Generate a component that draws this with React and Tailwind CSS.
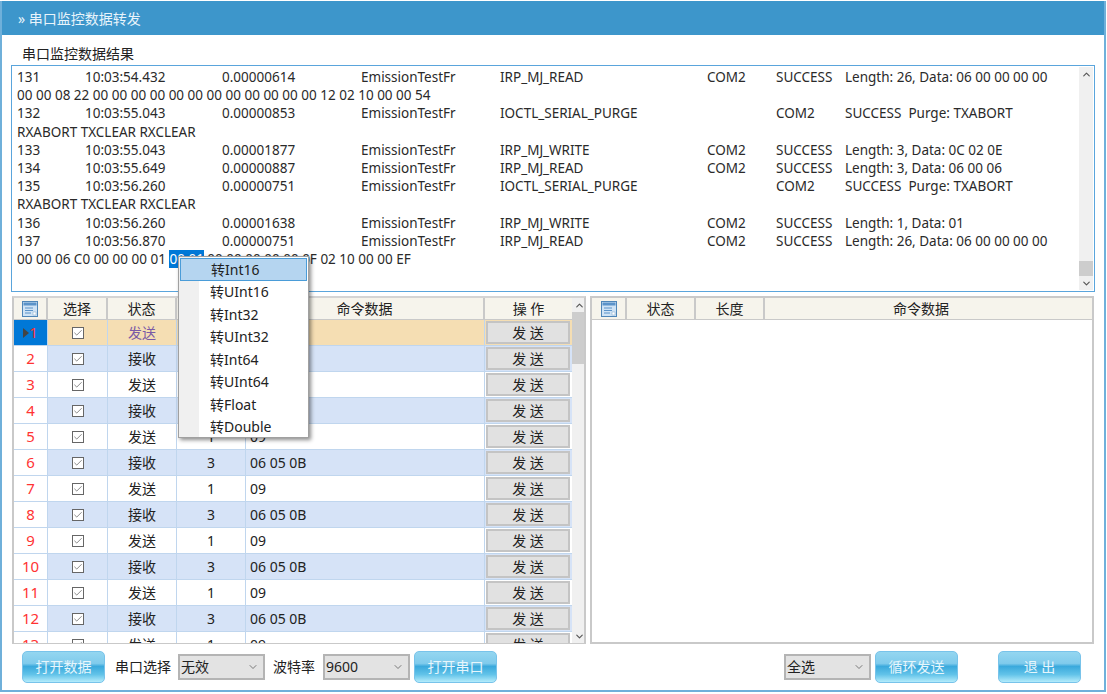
import React from 'react';
import { Check, ChevronDown, ChevronUp } from 'lucide-react';

const font = "font-['Noto_Sans','Noto_Sans_CJK_SC',sans-serif]";

const logLines = [
  ['131', '10:03:54.432', '0.00000614', 'EmissionTestFr', 'IRP_MJ_READ', 'COM2', 'SUCCESS', 'Length: 26, Data: 06 00 00 00 00'],
  '00 00 08 22 00 00 00 00 00 00 00 00 00 00 00 00 12 02 10 00 00 54',
  ['132', '10:03:55.043', '0.00000853', 'EmissionTestFr', 'IOCTL_SERIAL_PURGE', '', 'COM2', 'SUCCESS  Purge: TXABORT'],
  'RXABORT TXCLEAR RXCLEAR',
  ['133', '10:03:55.043', '0.00001877', 'EmissionTestFr', 'IRP_MJ_WRITE', 'COM2', 'SUCCESS', 'Length: 3, Data: 0C 02 0E'],
  ['134', '10:03:55.649', '0.00000887', 'EmissionTestFr', 'IRP_MJ_READ', 'COM2', 'SUCCESS', 'Length: 3, Data: 06 00 06'],
  ['135', '10:03:56.260', '0.00000751', 'EmissionTestFr', 'IOCTL_SERIAL_PURGE', '', 'COM2', 'SUCCESS  Purge: TXABORT'],
  'RXABORT TXCLEAR RXCLEAR',
  ['136', '10:03:56.260', '0.00001638', 'EmissionTestFr', 'IRP_MJ_WRITE', 'COM2', 'SUCCESS', 'Length: 1, Data: 01'],
  ['137', '10:03:56.870', '0.00000751', 'EmissionTestFr', 'IRP_MJ_READ', 'COM2', 'SUCCESS', 'Length: 26, Data: 06 00 00 00 00'],
];

const logWidths = ['w-[68px]', 'w-[137px]', 'w-[139px]', 'w-[139px]', 'w-[207px]', 'w-[69px]', 'w-[69px]', 'w-auto'];

const rows = Array.from({ length: 13 }, (_, i) => i + 1);
const menuItems = ['转Int16', '转UInt16', '转Int32', '转UInt32', '转Int64', '转UInt64', '转Float', '转Double'];

const GridIcon = () => (
  <svg width="16" height="16" viewBox="0 0 16 16" className="block">
    <rect x="0.5" y="0.5" width="15" height="15" fill="#cfe3f5" stroke="#4f86b8" />
    <rect x="1.5" y="1.5" width="13" height="3" fill="#5b93c9" />
    <path d="M3 7h8M3 9.5h8M3 12h6" stroke="#5b93c9" strokeWidth="1" />
    <rect x="11" y="11" width="3" height="3" fill="#ffffff" stroke="#7fa8cc" strokeWidth="0.5" />
  </svg>
);

const Checkbox = () => (
  <span className="w-[12px] h-[12px] border border-[#666] bg-white flex items-center justify-center">
    <Check size={10} strokeWidth={1.5} className="text-[#444]" />
  </span>
);

const ActionButton = ({ children, className = '' }) => (
  <div
    className={`h-[32px] w-[83px] rounded-[5px] border border-[#78c3ea] bg-[linear-gradient(to_bottom,#94d6f0_0%,#80cbec_38%,#3aa9dc_48%,#62c3e9_75%,#b4ecfb_100%)] flex items-center justify-center text-[14px] text-[#e6f6fc] ${className}`}
  >
    {children}
  </div>
);

const Dropdown = ({ value }) => (
  <div className="h-[26px] w-[87px] border-2 border-[#b4b4b4] bg-[#e3e3e3] flex items-center justify-between pl-[1px] pr-[4px] text-[14px] text-[#222]">
    <span>{value}</span>
    <ChevronDown size={12} strokeWidth={1.5} className="text-[#555]" />
  </div>
);

const Scrollbar = ({ className, thumb }) => (
  <div className={`bg-[#f0f0f0] flex flex-col items-center justify-between shrink-0 ${className}`}>
    <div className="h-[14px] flex items-center">
      <ChevronUp size={11} strokeWidth={2.5} className="text-[#555]" />
    </div>
    <div className="flex-1 w-full flex flex-col">{thumb}</div>
    <div className="h-[14px] flex items-center">
      <ChevronDown size={11} strokeWidth={2.5} className="text-[#555]" />
    </div>
  </div>
);

const HeadCell = ({ className, children }) => (
  <div className={`shrink-0 h-full border-r-2 border-[#c9c9c9] flex items-center justify-center ${className}`}>
    {children}
  </div>
);

export default function App() {
  return (
    <div className={`relative w-[1107px] h-[694px] overflow-hidden bg-white pt-px text-[#222] ${font}`}>
      <div className="w-[1106px] h-[691px] border-x-2 border-b-2 border-[#6fb0da] flex flex-col">
        <div className="h-[34px] shrink-0 bg-[#3d96cb] flex items-center pl-[16px] text-[14px] text-[#e8f4fb]">
          » 串口监控数据转发
        </div>

        <div className="h-[30px] shrink-0 flex items-center pl-[20px] pt-[6px] text-[14px]">串口监控数据结果</div>

        {/* log */}
        <div className="mx-[9px] h-[227px] shrink-0 border border-[#5aa5dc] flex overflow-hidden">
          <div className="flex-1 pl-[5px] pt-[2px] text-[13.5px] leading-[18.2px] text-[#2a2a2a] whitespace-pre">
            {logLines.map((line, i) =>
              typeof line === 'string' ? (
                <div key={i}>{line}</div>
              ) : (
                <div key={i} className="flex">
                  {line.map((cell, j) => (
                    <span key={j} className={`shrink-0 ${logWidths[j]}`}>{cell}</span>
                  ))}
                </div>
              )
            )}
            <div>
              00 00 06 C0 00 00 00 01 <span className="bg-[#0078d7] text-white">00 01</span> 00 00 00 00 00 0F 02 10 00 00 EF
            </div>
          </div>
          <Scrollbar
            className="w-[14px] my-px mr-px"
            thumb={
              <>
                <div className="h-[180px]" />
                <div className="h-[15px] bg-[#cdcdcd]" />
              </>
            }
          />
        </div>

        {/* tables */}
        <div className="mt-[4px] mx-[10px] h-[348px] shrink-0 flex gap-[4px]">
          <div className="w-[574px] h-full border-2 border-b-1 border-[#c9c9c9] border-t-[#d4d4d4] flex overflow-hidden">
            <div className="w-[558px] shrink-0 text-[14px]">
              <div className="h-[22px] flex bg-[#f6f4ec] border-b border-[#c9c9c9]">
                <HeadCell className="w-[34px]"><GridIcon /></HeadCell>
                <HeadCell className="w-[60px]">选择</HeadCell>
                <HeadCell className="w-[69px]">状态</HeadCell>
                <HeadCell className="w-[69px]">长度</HeadCell>
                <HeadCell className="w-[239px]">命令数据</HeadCell>
                <div className="flex-1 flex items-center justify-center">操 作</div>
              </div>
              {rows.map((n) => {
                const selected = n === 1;
                const even = n % 2 === 0;
                const bg = selected ? 'bg-[#f5deb3]' : even ? 'bg-[#d6e3f7]' : 'bg-white';
                return (
                  <div key={n} className={`h-[26px] flex border-b border-[#c0d6ee] ${bg}`}>
                    <div className={`w-[34px] shrink-0 border-r border-[#c0d6ee] flex items-center justify-center text-[15px] text-[#ff3333] ${selected ? 'bg-[#0078d7] text-[#9c2b4a]' : 'bg-white'}`}>
                      {selected && <span className="w-0 h-0 border-y-[5px] border-y-transparent border-l-[6px] border-l-[#444]" />}
                      {n}
                    </div>
                    <div className="w-[60px] shrink-0 border-r border-[#c0d6ee] flex items-center justify-center"><Checkbox /></div>
                    <div className={`w-[69px] shrink-0 border-r border-[#c0d6ee] flex items-center justify-center ${selected ? 'text-[#7a5aa6]' : ''}`}>
                      {even ? '接收' : '发送'}
                    </div>
                    <div className="w-[69px] shrink-0 border-r border-[#c0d6ee] flex items-center justify-center">{even ? '3' : '1'}</div>
                    <div className="w-[239px] shrink-0 border-r border-[#c0d6ee] flex items-center pl-[4px]">{even ? '06 05 0B' : '09'}</div>
                    <div className="flex-1 flex items-center pl-px">
                      <div className="w-[84px] h-[23px] border-2 border-[#c4c4c4] bg-[#e1e1e1] flex items-center justify-center">发 送</div>
                    </div>
                  </div>
                );
              })}
            </div>
            <Scrollbar
              className="w-[14px] h-full"
              thumb={<div className="h-[52px] bg-[#cdcdcd]" />}
            />
          </div>

          <div className="flex-1 h-full border-2 border-[#c9c9c9] bg-white text-[14px]">
            <div className="h-[22px] flex bg-[#f6f4ec] border-b border-[#c9c9c9]">
              <HeadCell className="w-[35px]"><GridIcon /></HeadCell>
              <HeadCell className="w-[69px]">状态</HeadCell>
              <HeadCell className="w-[69px]">长度</HeadCell>
              <div className="w-[312px] flex items-center justify-center">命令数据</div>
            </div>
          </div>
        </div>

        {/* bottom bar */}
        <div className="flex-1 flex items-center pl-[20px] pb-px text-[14px]">
          <ActionButton>打开数据</ActionButton>
          <span className="ml-[10px] mr-[7px]">串口选择</span>
          <Dropdown value="无效" />
          <span className="ml-[8px] mr-[8px]">波特率</span>
          <Dropdown value="9600" />
          <ActionButton className="ml-[4px]">打开串口</ActionButton>
          <div className="ml-[287px]"><Dropdown value="全选" /></div>
          <ActionButton className="ml-[4px]">循环发送</ActionButton>
          <ActionButton className="ml-[40px]">退 出</ActionButton>
        </div>
      </div>

      {/* context menu */}
      <div className="absolute left-[178px] top-[256px] w-[131px] h-[182px] border border-[#a0a0a0] bg-white shadow-[2px_2px_4px_rgba(0,0,0,0.45)] text-[14px] text-[#222]">
        <div className="absolute left-0 top-0 bottom-0 w-[20px] bg-[#f0f0f0]" />
        <div className="relative pt-px px-px flex flex-col">
          {menuItems.map((item, i) => (
            <div
              key={item}
              className={`h-[22.5px] flex items-center pl-[30px] ${i === 0 ? 'bg-[#b5d5f0] border border-[#4a9cd8]' : ''}`}
            >
              {item}
            </div>
          ))}
        </div>
      </div>
    </div>
  );
}
